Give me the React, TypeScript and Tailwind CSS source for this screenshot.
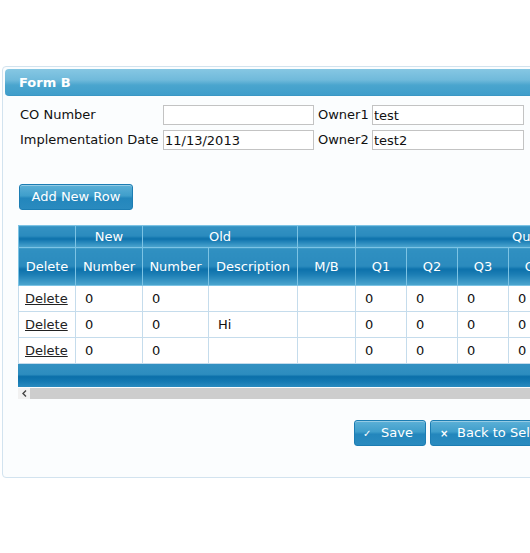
const rows = [
  { newNo: '0', oldNo: '0', desc: '', mb: '' },
  { newNo: '0', oldNo: '0', desc: 'Hi', mb: '' },
  { newNo: '0', oldNo: '0', desc: '', mb: '' },
];

const quarters = ['Q1', 'Q2', 'Q3', 'Q4', 'Q5', 'Q6', 'Q7'];

const head1 =
  'h-[22px] p-0 border border-[#7cc3e4] text-white font-normal bg-[linear-gradient(to_bottom,#3392c3_0%,#2b8bbe_45%,#0c70aa_58%,#2a8abe_78%,#4ea6cf_100%)]';
const head2 =
  'h-[38px] p-0 border border-[#7cc3e4] text-white font-normal bg-[linear-gradient(to_bottom,#3090c1_0%,#2b8bbe_48%,#0d71ab_56%,#1b7db4_70%,#4da6cf_100%)]';
const cell = 'h-[26px] px-[9px] py-0 border border-[#c5dcec] bg-white text-left';

const btn =
  'h-[26px] rounded-[3px] border border-[#1c7db3] text-white text-[13px] bg-[linear-gradient(to_bottom,#5cb0d7_0%,#3f9ecb_45%,#2386bc_55%,#2a8bbf_100%)] shadow-[inset_0_1px_0_rgba(255,255,255,0.35)]';

const App = () => {
  return (
    <div
      className="w-[530px] h-[553px] overflow-hidden bg-white pt-[66px] pl-[2px] text-[13px] text-[#111]"
      style={{ fontFamily: '"DejaVu Sans", Verdana, sans-serif' }}
    >
      <div className="w-[720px] h-[412px] border border-[#d2e3ef] rounded-[4px] bg-[#fbfdfe] p-[2px]">
        {/* title bar */}
        <div className="h-[27px] rounded-[4px] flex items-center pl-[14px] pt-[2px] text-white font-bold text-[13px] bg-[linear-gradient(to_bottom,#86c7e3_0%,#70badb_42%,#4aa5ce_62%,#3f9ecb_100%)] border-b border-[#3a97c4]">
          Form B
        </div>

        {/* form fields */}
        <div className="mt-[9px] ml-[15px] grid grid-cols-[143px_151px_58px_152px] gap-y-[5px] items-center">
          <span>CO Number</span>
          <input className="h-[20px] border border-[#c3c3c3] bg-white px-[1px] outline-none" defaultValue="" />
          <span className="pl-[4px]">Owner1</span>
          <input className="h-[20px] border border-[#c3c3c3] bg-white px-[1px] outline-none" defaultValue="test" />
          <span>Implementation Date</span>
          <input className="h-[20px] border border-[#c3c3c3] bg-white px-[1px] outline-none" defaultValue="11/13/2013" />
          <span className="pl-[4px]">Owner2</span>
          <input className="h-[20px] border border-[#c3c3c3] bg-white px-[1px] outline-none" defaultValue="test2" />
        </div>

        <button className={`${btn} mt-[34px] ml-[14px] w-[114px] block`}>Add New Row</button>

        {/* grid */}
        <div className="mt-[15px] ml-[13px] w-[700px] overflow-hidden">
          <table className="table-fixed border-collapse w-[920px]">
            <colgroup>
              <col className="w-[57px]" />
              <col className="w-[67px]" />
              <col className="w-[66px]" />
              <col className="w-[89px]" />
              <col className="w-[58px]" />
              {quarters.map((q, i) => (
                <col key={q} className={i < 4 ? 'w-[51px]' : 'w-[53px]'} />
              ))}
              <col className="w-[220px]" />
            </colgroup>
            <thead>
              <tr>
                <th className={head1}></th>
                <th className={head1}>New</th>
                <th className={head1} colSpan={2}>
                  Old
                </th>
                <th className={head1}></th>
                <th className={head1} colSpan={7}>
                  Quarter
                </th>
                <th className={head1}></th>
              </tr>
              <tr>
                <th className={head2}>Delete</th>
                <th className={head2}>Number</th>
                <th className={head2}>Number</th>
                <th className={head2}>Description</th>
                <th className={head2}>M/B</th>
                {quarters.map((q) => (
                  <th key={q} className={head2}>
                    {q}
                  </th>
                ))}
                <th className={head2}>Total</th>
              </tr>
            </thead>
            <tbody>
              {rows.map((r, i) => (
                <tr key={i}>
                  <td className={`${cell} !px-[6px]`}>
                    <a href="#" className="underline text-[#222]">
                      Delete
                    </a>
                  </td>
                  <td className={cell}>{r.newNo}</td>
                  <td className={cell}>{r.oldNo}</td>
                  <td className={cell}>{r.desc}</td>
                  <td className={cell}>{r.mb}</td>
                  {quarters.map((q) => (
                    <td key={q} className={cell}>
                      0
                    </td>
                  ))}
                  <td className={cell}>0</td>
                </tr>
              ))}
            </tbody>
          </table>
          <div className="h-[23px] bg-[linear-gradient(to_bottom,#3391c2_0%,#2d8dbf_45%,#0b6fa9_55%,#1479b2_75%,#2a8bbf_100%)]"></div>
          <div className="mt-[1px] h-[11px] flex">
            <div className="w-[12px] h-full bg-[#f1f1f1] flex items-center justify-center">
              <svg width="5" height="7" viewBox="0 0 5 7">
                <path d="M4 0.5 L1 3.5 L4 6.5" fill="none" stroke="#444" strokeWidth="1.4" />
              </svg>
            </div>
            <div className="flex-1 h-full bg-[#cdcdcd]"></div>
          </div>
        </div>

        {/* actions */}
        <div className="mt-[21px] ml-[349px] flex gap-[4px]">
          <button className={`${btn} w-[72px] flex items-center pl-[8px]`}>
            <span className="text-[10px] w-[18px] text-left">✓</span>
            <span>Save</span>
          </button>
          <button className={`${btn} w-[160px] flex items-center pl-[9px]`}>
            <span className="text-[10px] w-[17px] text-left font-bold">×</span>
            <span>Back to Selection</span>
          </button>
        </div>
      </div>
    </div>
  );
};

export default App;
